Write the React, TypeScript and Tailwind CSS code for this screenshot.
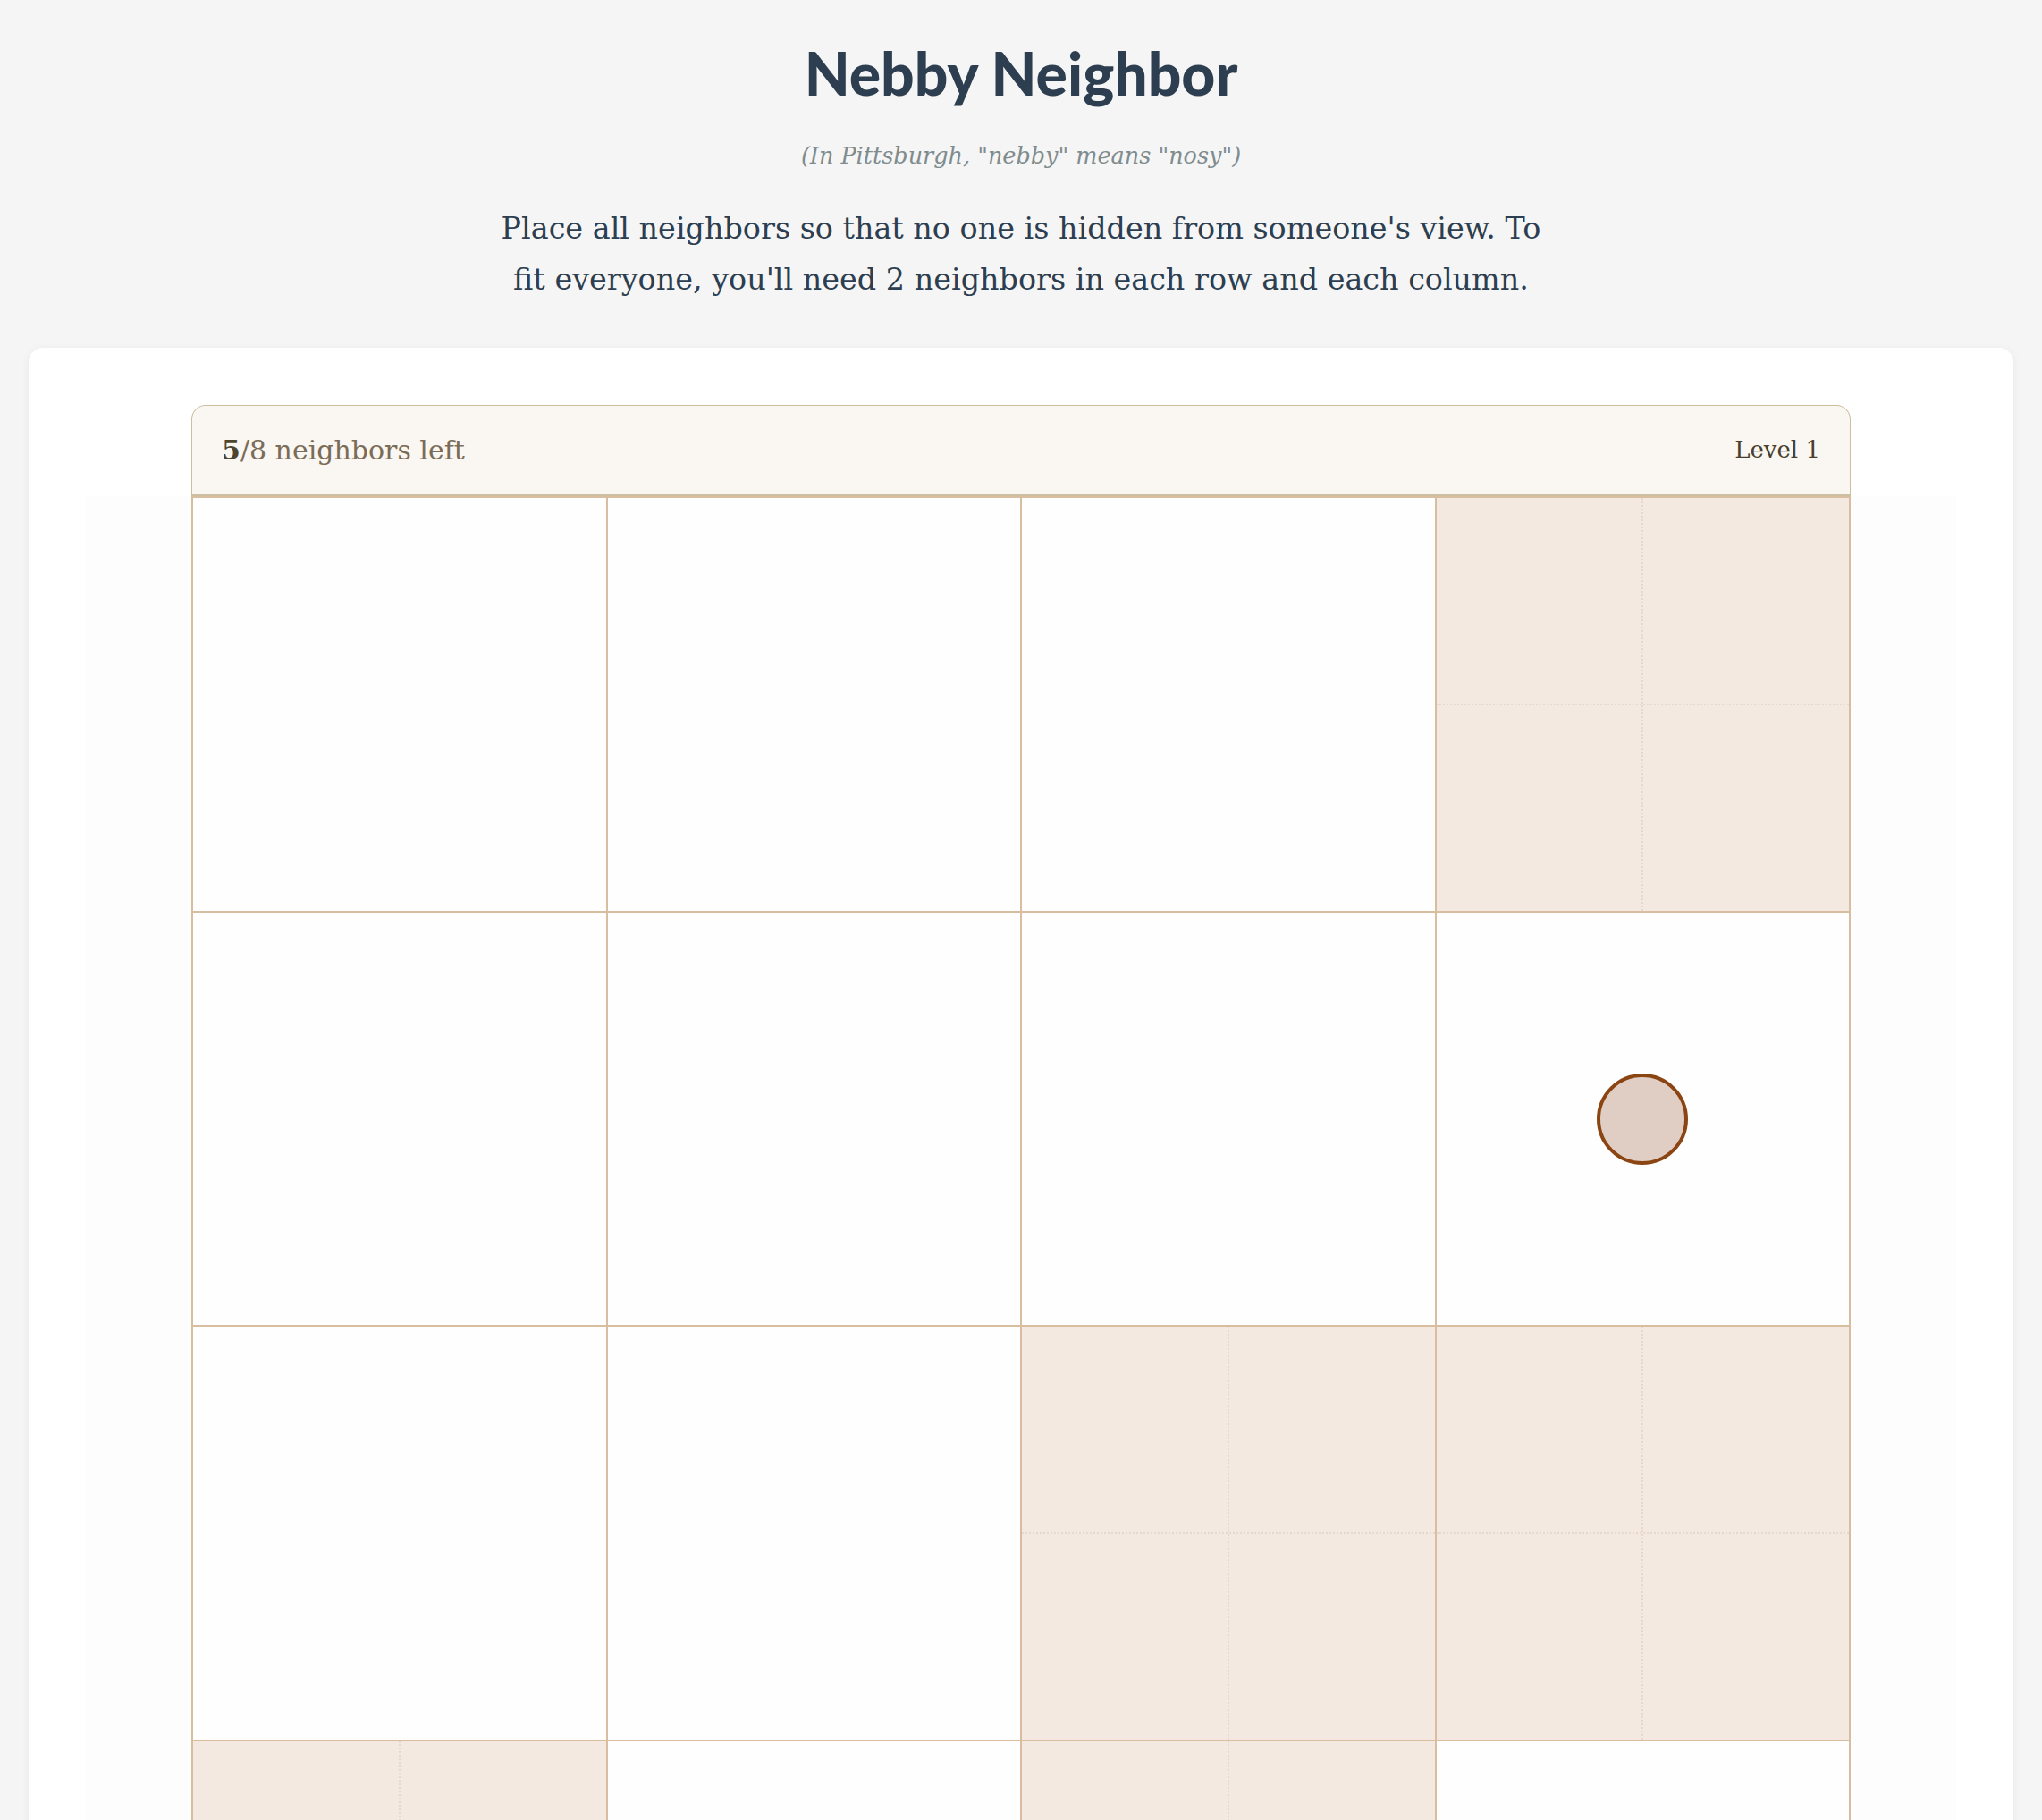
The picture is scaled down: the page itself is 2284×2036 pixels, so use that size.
import React from 'react';

const shaded = new Set(['0-3', '2-2', '2-3', '3-0', '3-2']);

function Cell({ r, c }: { r: number; c: number }) {
  const isShaded = shaded.has(`${r}-${c}`);
  const hasNeighbor = r === 1 && c === 3;
  return (
    <div
      className={`relative aspect-square border border-[#d9bd9f] flex items-center justify-center ${
        isShaded ? 'bg-[#f4e9e0]' : 'bg-[#fefefe]'
      }`}
    >
      {isShaded && (
        <>
          <div className="absolute top-0 bottom-0 left-1/2 -translate-x-1/2 border-l-2 border-dotted border-[#e6d8cd]" />
          <div className="absolute left-0 right-0 top-1/2 -translate-y-1/2 border-t-2 border-dotted border-[#e6d8cd]" />
        </>
      )}
      {hasNeighbor && (
        <div className="w-[102px] h-[102px] rounded-full border-4 border-[#8b4513] bg-[#e0cec4]" />
      )}
    </div>
  );
}

export default function App() {
  return (
    <div className="min-h-screen bg-[#f5f5f5] px-8 pb-10" style={{ fontFamily: '"DejaVu Serif", serif' }}>
      <header className="pt-[42px] text-center">
        <h1 className="text-[66px] leading-[80px] font-black text-[#2c3e50]" style={{ fontFamily: 'Lato, sans-serif' }}>
          Nebby Neighbor
        </h1>
        <p className="mt-[33px] text-[25.5px] italic text-[#7f8c8d]">
          (In Pittsburgh, "nebby" means "nosy")
        </p>
        <p className="mx-auto mt-[34px] max-w-[1190px] text-[33.4px] leading-[57px] text-[#2c3e50]">
          Place all neighbors so that no one is hidden from someone's view. To fit everyone, you'll need 2 neighbors in
          each row and each column.
        </p>
      </header>

      <main className="mt-[48px] rounded-2xl bg-white px-[64px] pt-[64px] shadow-[0_2px_10px_rgba(0,0,0,0.06)]">
        <div className="mx-[118px] flex h-[102px] items-center justify-between rounded-t-2xl border border-b-2 border-[#cdbf9f] bg-[#faf7f2] px-[33px]">
          <span className="text-[30px] text-[#7a6c58]">
            <span className="font-bold text-[#4e452f]">5</span>/8 neighbors left
          </span>
          <span className="text-[26px] text-[#4a3f2f]">Level 1</span>
        </div>
        <div className="bg-[#fdfdfd] px-[118px] pb-[118px]">
          <div className="grid grid-cols-4 border border-[#d9bd9f]">
            {Array.from({ length: 16 }, (_, i) => (
              <Cell key={i} r={Math.floor(i / 4)} c={i % 4} />
            ))}
          </div>
        </div>
      </main>
    </div>
  );
}
